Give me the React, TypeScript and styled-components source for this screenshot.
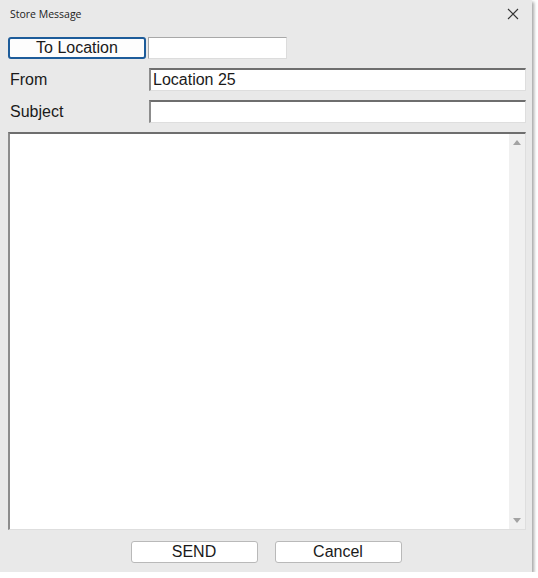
import React from 'react';
import styled, { createGlobalStyle } from 'styled-components';

const GlobalStyle = createGlobalStyle`
  html, body {
    margin: 0;
    padding: 0;
    background: #ffffff;
  }
`;

const Window = styled.div`
  width: 532px;
  height: 572px;
  background: #e9e9e9;
  box-shadow: 2px 2px 3px rgba(0, 0, 0, 0.35);
  display: flex;
  flex-direction: column;
  font-family: 'Liberation Sans', Arial, sans-serif;
  color: #1a1a1a;
  box-sizing: border-box;
`;

const TitleBar = styled.div`
  height: 28px;
  display: flex;
  align-items: center;
  justify-content: space-between;
  padding: 0 12px 0 10px;
  font-family: 'Open Sans', 'Liberation Sans', sans-serif;
  font-size: 10.5px;
  color: #222;
`;

const CloseButton = styled.button`
  border: none;
  background: none;
  padding: 0;
  width: 14px;
  height: 14px;
  display: flex;
  align-items: center;
  justify-content: center;
  cursor: pointer;
`;

const Form = styled.div`
  flex: 1;
  display: flex;
  flex-direction: column;
  padding: 9px 6px 0 8px;
`;

const Row = styled.div<{ $mb: number }>`
  display: flex;
  align-items: center;
  margin-bottom: ${p => p.$mb}px;
`;

const LocationButton = styled.button`
  width: 138px;
  height: 22px;
  box-sizing: border-box;
  background: #fdfdfd;
  border: 2px solid #1d5c9a;
  border-radius: 3px;
  font-family: 'Liberation Sans', Arial, sans-serif;
  font-size: 16px;
  color: #1a1a1a;
  padding: 0;
  margin-right: 2px;
`;

const Label = styled.label`
  width: 141px;
  padding-left: 2px;
  box-sizing: border-box;
  font-size: 16px;
  color: #1a1a1a;
`;

const TextInput = styled.input<{ $w?: number; $soft?: boolean }>`
  ${p => (p.$w ? `width: ${p.$w}px;` : 'flex: 1;')}
  height: ${p => (p.$soft ? 22 : 23)}px;
  box-sizing: border-box;
  background: #ffffff;
  border-style: solid;
  border-width: ${p => (p.$soft ? '1px' : '2px 1px 1px 2px')};
  border-color: ${p =>
    p.$soft ? '#a8a8a8 #dcdcdc #dcdcdc #a8a8a8' : '#6e6e6e #dedede #dedede #8c8c8c'};
  font-family: 'Liberation Sans', Arial, sans-serif;
  font-size: 16px;
  color: #1a1a1a;
  padding: 0 2px;
  outline: none;
`;

const MessageBox = styled.div`
  height: 398px;
  margin-top: 9px;
  display: flex;
  box-sizing: border-box;
  background: #ffffff;
  border-style: solid;
  border-width: 2px 1px 1px 2px;
  border-color: #6e6e6e #dedede #dedede #8c8c8c;
`;

const MessageArea = styled.textarea`
  flex: 1;
  border: none;
  resize: none;
  outline: none;
  font-family: 'Liberation Sans', Arial, sans-serif;
  font-size: 16px;
  padding: 2px;
`;

const Scrollbar = styled.div`
  width: 16px;
  background: #f0f0f0;
  display: flex;
  flex-direction: column;
  justify-content: space-between;
  align-items: center;
  padding: 6px 0 6px;
`;

const Arrow = styled.div<{ $down?: boolean }>`
  width: 0;
  height: 0;
  border-left: 4px solid transparent;
  border-right: 4px solid transparent;
  ${p =>
    p.$down ? 'border-top: 5px solid #a3a3a3;' : 'border-bottom: 5px solid #a3a3a3;'}
`;

const Footer = styled.div`
  display: flex;
  justify-content: center;
  gap: 17px;
  padding: 11px 0 9px;
`;

const DialogButton = styled.button`
  width: 127px;
  height: 22px;
  box-sizing: border-box;
  background: #ffffff;
  border: 1px solid #b9b9b9;
  border-radius: 3px;
  font-family: 'Liberation Sans', Arial, sans-serif;
  font-size: 16px;
  color: #1a1a1a;
  padding: 0;
`;

export default function App() {
  return (
    <>
      <GlobalStyle />
      <Window>
        <TitleBar>
          <span>Store Message</span>
          <CloseButton title='Close'>
            <svg width='12' height='12' viewBox='0 0 12 12'>
              <path d='M1 1 L11 11 M11 1 L1 11' stroke='#333' strokeWidth='1.1' />
            </svg>
          </CloseButton>
        </TitleBar>
        <Form>
          <Row $mb={9}>
            <LocationButton>To Location</LocationButton>
            <TextInput $w={139} $soft />
          </Row>
          <Row $mb={9}>
            <Label>From</Label>
            <TextInput defaultValue='Location 25' />
          </Row>
          <Row $mb={0}>
            <Label>Subject</Label>
            <TextInput />
          </Row>
          <MessageBox>
            <MessageArea />
            <Scrollbar>
              <Arrow />
              <Arrow $down />
            </Scrollbar>
          </MessageBox>
        </Form>
        <Footer>
          <DialogButton>SEND</DialogButton>
          <DialogButton>Cancel</DialogButton>
        </Footer>
      </Window>
    </>
  );
}
